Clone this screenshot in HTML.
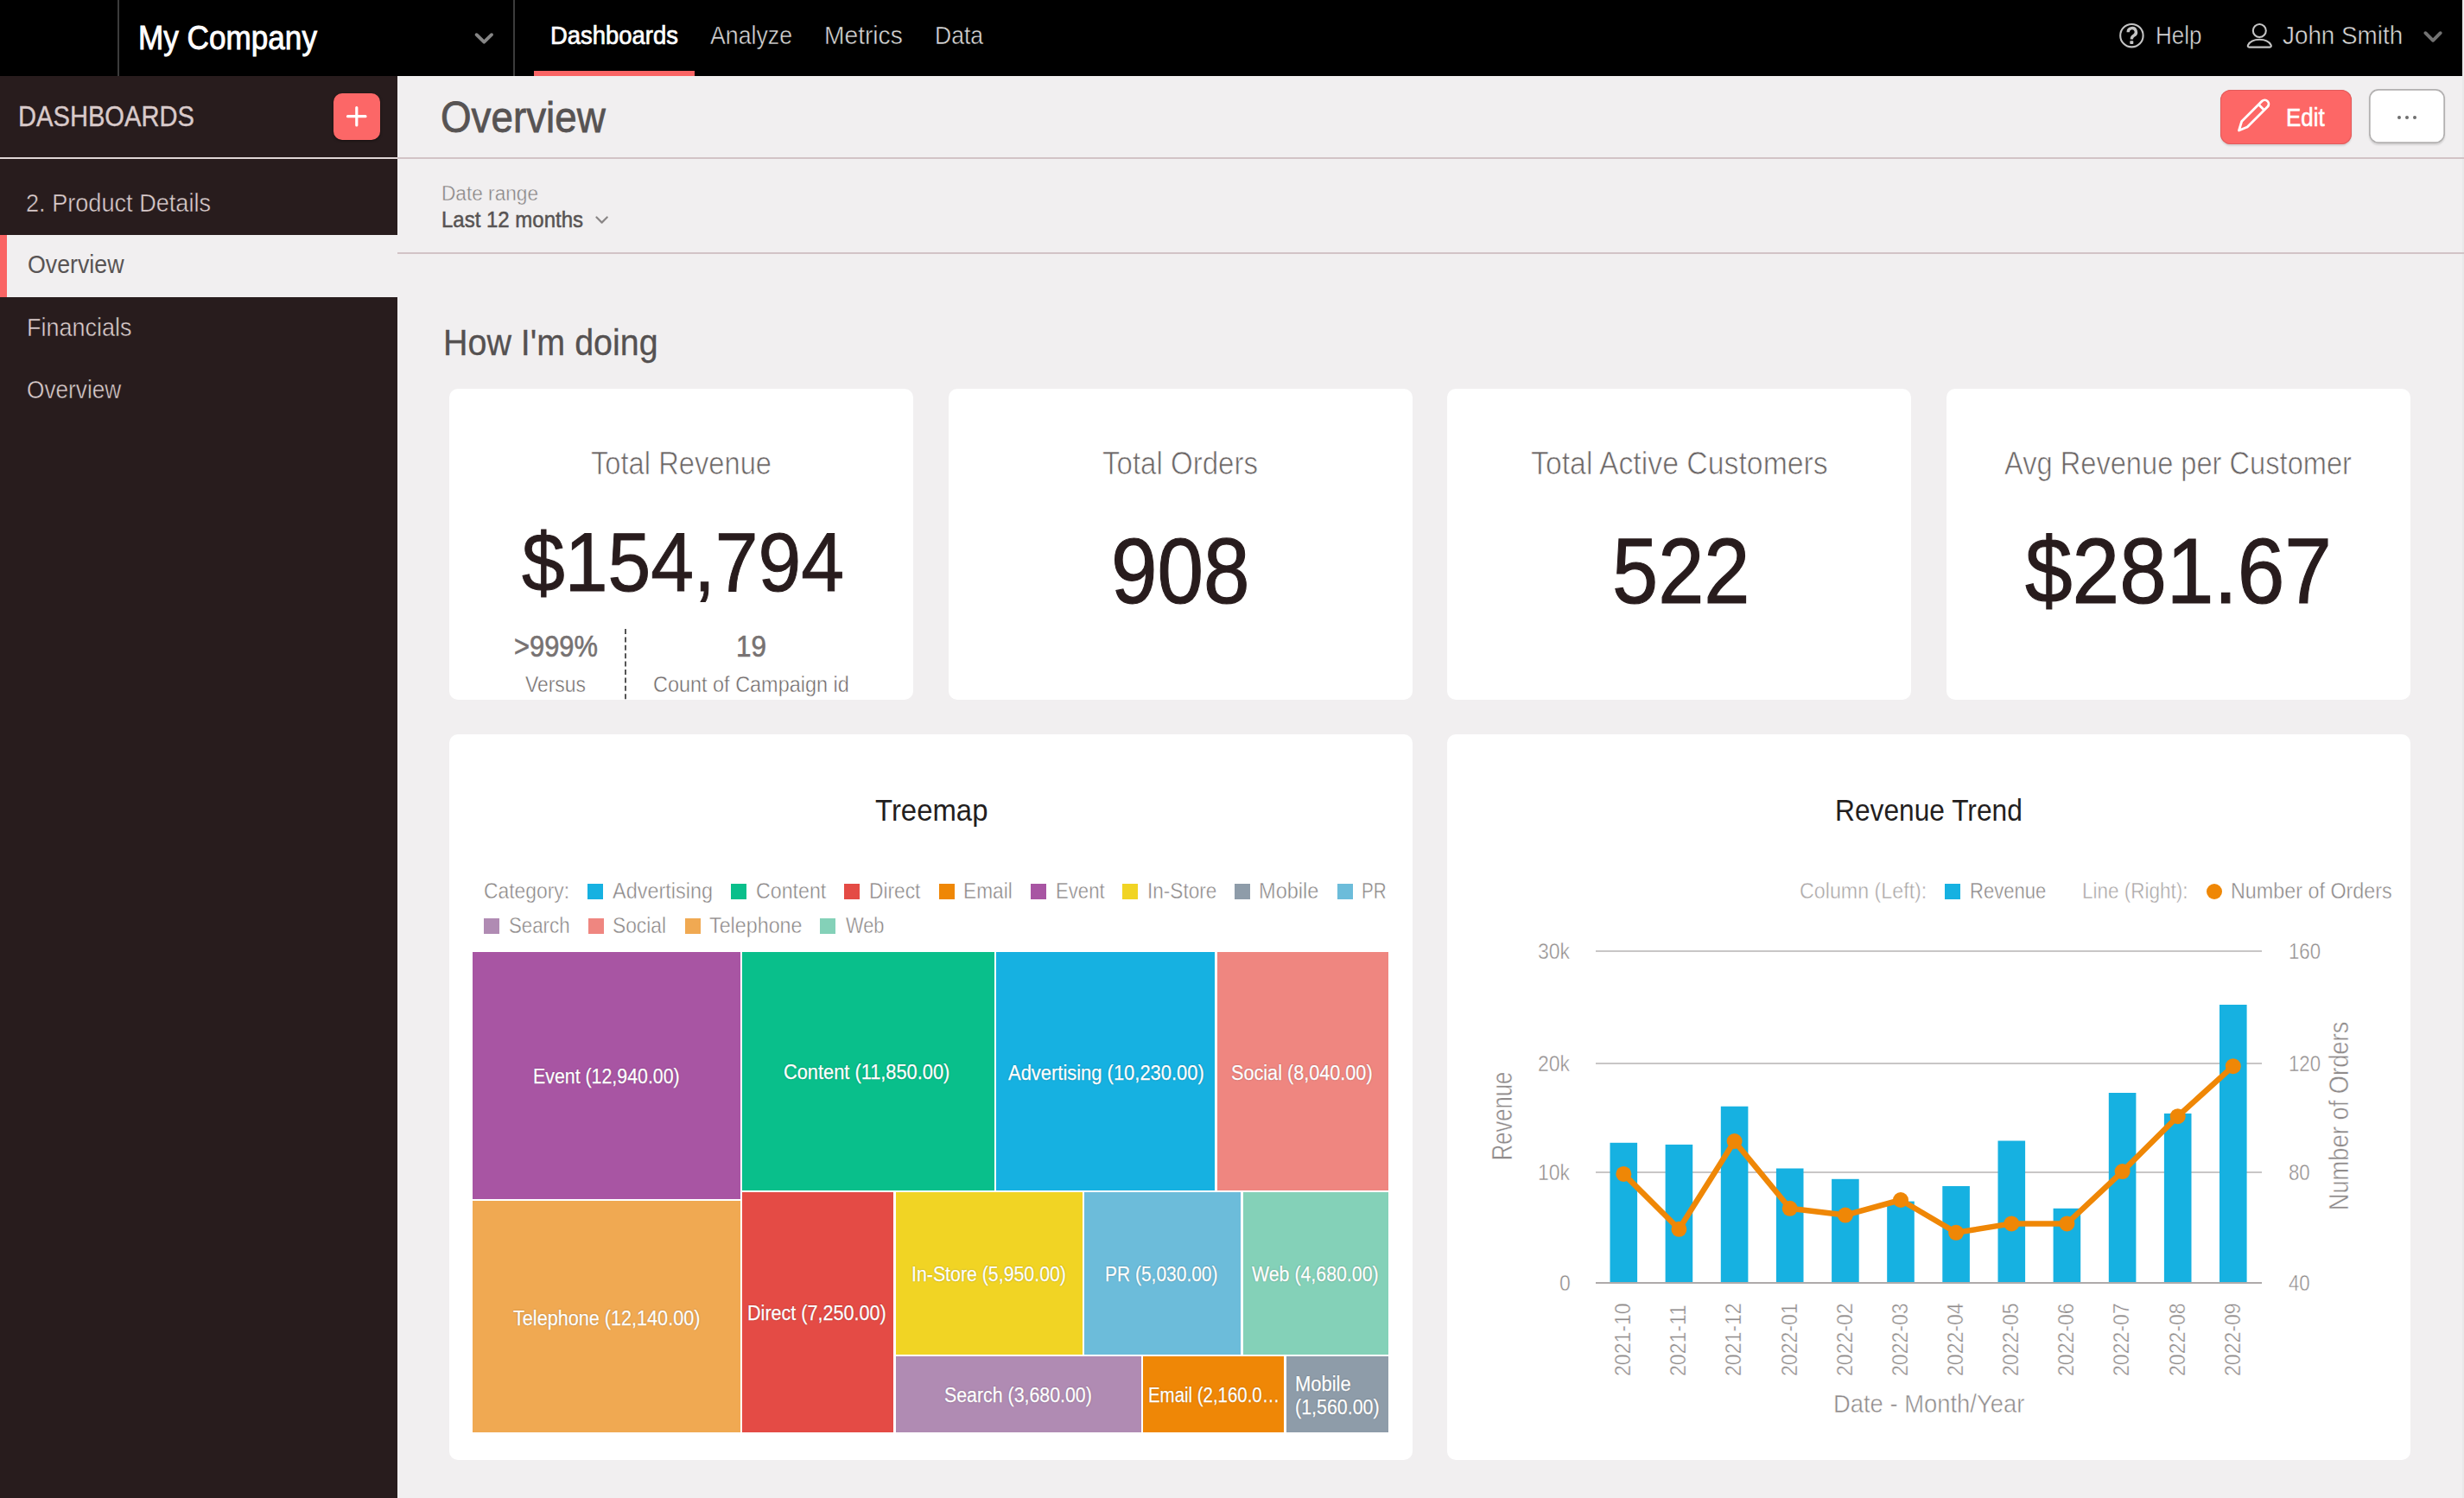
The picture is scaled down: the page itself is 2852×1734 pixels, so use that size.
<!DOCTYPE html>
<html><head><meta charset="utf-8"><title>Overview</title>
<style>
html,body{margin:0;padding:0;width:2852px;height:1734px;overflow:hidden;background:#f1eff0;font-family:"Liberation Sans",sans-serif;}
.t{position:absolute;white-space:nowrap;transform-origin:0 0;}
.r{position:absolute;}
.card{position:absolute;background:#fff;border-radius:10px;}
svg{position:absolute;left:0;top:0;overflow:visible;}
</style></head><body>
<div class="r" style="left:0.0px;top:0.0px;width:2850.0px;height:88.0px;background:#000;"></div>
<div class="r" style="left:2850.0px;top:0.0px;width:2.0px;height:1734.0px;background:#e9e9e9;"></div>
<div class="r" style="left:136.0px;top:0.0px;width:2.0px;height:88.0px;background:#3c3c3c;"></div>
<div class="r" style="left:594.0px;top:0.0px;width:2.0px;height:88.0px;background:#3c3c3c;"></div>
<div class="t" style="left:159.5px;top:24.1px;font-size:39.24px;line-height:39.24px;color:#fff;transform:scaleX(0.8955);-webkit-text-stroke:0.9px #fff;">My Company</div>
<svg width="2852" height="88" style="left:0;top:0"><polyline points="551.6,40.2 560.3,48.6 569,40.2" fill="none" stroke="#858585" stroke-width="3.9" stroke-linecap="round" stroke-linejoin="round"/><polyline points="2807.4,38.2 2816.1,46.8 2824.7,38.2" fill="none" stroke="#727272" stroke-width="3.9" stroke-linecap="round" stroke-linejoin="round"/><circle cx="2467.4" cy="41.2" r="13.2" fill="none" stroke="#c4c4c4" stroke-width="2.1"/><path d="M2463.2,37.2 a4.6,4.6 0 1 1 6.6,4.1 c-1.6,0.9 -2.4,1.8 -2.4,3.4 v0.9" fill="none" stroke="#c4c4c4" stroke-width="3.4" stroke-linecap="butt"/><rect x="2465.3" y="47.3" width="4" height="3.8" rx="0.8" fill="#c4c4c4"/><circle cx="2615.3" cy="35.5" r="7.5" fill="none" stroke="#c4c4c4" stroke-width="2.1"/><path d="M2603.5,54.6 c-1.6,0 -2.2,-1.2 -1.4,-2.6 c2.2,-3.9 7,-6.2 13.2,-6.2 c6.2,0 11,2.3 13.2,6.2 c0.8,1.4 0.2,2.6 -1.4,2.6 z" fill="none" stroke="#c4c4c4" stroke-width="2.1" stroke-linejoin="round"/></svg>
<div class="t" style="left:636.7px;top:27.4px;font-size:29.07px;line-height:29.07px;color:#fff;transform:scaleX(0.9441);-webkit-text-stroke:0.7px #fff;">Dashboards</div>
<div class="t" style="left:822.0px;top:27.4px;font-size:29.07px;line-height:29.07px;color:#d8d8d8;transform:scaleX(0.9186);-webkit-text-stroke:0.5px #000;">Analyze</div>
<div class="t" style="left:953.8px;top:27.4px;font-size:29.07px;line-height:29.07px;color:#d8d8d8;transform:scaleX(0.9693);-webkit-text-stroke:0.5px #000;">Metrics</div>
<div class="t" style="left:1081.6px;top:27.4px;font-size:29.07px;line-height:29.07px;color:#d8d8d8;transform:scaleX(0.9119);-webkit-text-stroke:0.5px #000;">Data</div>
<div class="r" style="left:618.0px;top:82.0px;width:186.0px;height:6.0px;background:#fa6464;"></div>
<div class="t" style="left:2494.5px;top:26.8px;font-size:29.07px;line-height:29.07px;color:#d8d8d8;transform:scaleX(0.8945);-webkit-text-stroke:0.5px #000;">Help</div>
<div class="t" style="left:2641.8px;top:26.8px;font-size:29.07px;line-height:29.07px;color:#d8d8d8;transform:scaleX(0.9572);-webkit-text-stroke:0.5px #000;">John Smith</div>
<div class="r" style="left:0.0px;top:88.0px;width:460.0px;height:1646.0px;background:#281c1d;"></div>
<div class="t" style="left:21.4px;top:118.1px;font-size:33.43px;line-height:33.43px;color:#d9caca;transform:scaleX(0.8714);-webkit-text-stroke:0.4px #d9caca;">DASHBOARDS</div>
<div class="r" style="left:386.0px;top:108.0px;width:54.0px;height:54.0px;background:#fc6767;border-radius:10px;box-shadow:0 1px 3px rgba(0,0,0,0.5);"></div>
<svg width="460" height="200" style="left:0;top:0"><path d="M402.5,134.7 h20.5 M412.8,124.5 v20.5" stroke="#fff" stroke-width="3.2" stroke-linecap="round"/></svg>
<div class="r" style="left:0.0px;top:182.0px;width:460.0px;height:2.0px;background:#e0d6d6;"></div>
<div class="t" style="left:30.4px;top:220.2px;font-size:29.80px;line-height:29.80px;color:#dccdcd;transform:scaleX(0.9100);-webkit-text-stroke:0.5px #281c1d;">2. Product Details</div>
<div class="r" style="left:0.0px;top:272.0px;width:460.0px;height:72.0px;background:#f1eff0;"></div>
<div class="r" style="left:0.0px;top:272.0px;width:8.0px;height:72.0px;background:#fa6464;"></div>
<div class="t" style="left:31.5px;top:292.4px;font-size:29.07px;line-height:29.07px;color:#585454;transform:scaleX(0.9206);">Overview</div>
<div class="t" style="left:31.0px;top:364.4px;font-size:29.51px;line-height:29.51px;color:#dccdcd;transform:scaleX(0.9153);-webkit-text-stroke:0.5px #281c1d;">Financials</div>
<div class="t" style="left:31.0px;top:436.8px;font-size:29.07px;line-height:29.07px;color:#dccdcd;transform:scaleX(0.9025);-webkit-text-stroke:0.5px #281c1d;">Overview</div>
<div class="t" style="left:510.0px;top:111.2px;font-size:49.42px;line-height:49.42px;color:#575353;transform:scaleX(0.9268);-webkit-text-stroke:0.8px #575353;">Overview</div>
<div class="r" style="left:2570.0px;top:103.5px;width:152.0px;height:63.0px;background:#fd6766;border-radius:12px;box-shadow:0 0 0 1px #e25b5b inset,0 1.5px 2px rgba(0,0,0,0.12);"></div>
<svg width="2852" height="200" style="left:0;top:0"><path d="M2591.5,151 l3.2,-10.5 l23.5,-23.5 a4.6,4.6 0 0 1 6.5,6.5 l-23.5,23.5 z M2614.3,120.9 l6.5,6.5" fill="none" stroke="#fff" stroke-width="2.8" stroke-linejoin="round"/></svg>
<div class="t" style="left:2646.3px;top:121.3px;font-size:29.65px;line-height:29.65px;color:#fff;transform:scaleX(0.8732);-webkit-text-stroke:0.6px #fff;">Edit</div>
<div class="r" style="left:2742.3px;top:103.0px;width:87.3px;height:63.3px;background:#fff;border-radius:11px;box-shadow:0 0 0 1.7px #b2b0b0 inset,0 1.5px 2px rgba(0,0,0,0.12);"></div>
<div class="r" style="left:2774.8px;top:134.0px;width:3.8px;height:3.8px;background:#6f6f6f;border-radius:50%;"></div>
<div class="r" style="left:2784.0px;top:134.0px;width:3.8px;height:3.8px;background:#6f6f6f;border-radius:50%;"></div>
<div class="r" style="left:2793.3px;top:134.0px;width:3.8px;height:3.8px;background:#6f6f6f;border-radius:50%;"></div>
<div class="r" style="left:460.0px;top:182.0px;width:2392.0px;height:2.0px;background:#d2c3c6;"></div>
<div class="t" style="left:511.4px;top:211.5px;font-size:24.71px;line-height:24.71px;color:#858181;transform:scaleX(0.9162);-webkit-text-stroke:0.45px #f1eff0;">Date range</div>
<div class="t" style="left:511.0px;top:241.9px;font-size:25.00px;line-height:25.00px;color:#575353;transform:scaleX(0.9594);-webkit-text-stroke:0.5px #575353;">Last 12 months</div>
<svg width="2852" height="300" style="left:0;top:0"><polyline points="690.5,251.5 696.6,257.6 702.7,251.5" fill="none" stroke="#8a8686" stroke-width="2.2" stroke-linecap="round" stroke-linejoin="round"/></svg>
<div class="r" style="left:460.0px;top:292.0px;width:2392.0px;height:2.0px;background:#d2c3c6;"></div>
<div class="t" style="left:512.6px;top:375.7px;font-size:42.15px;line-height:42.15px;color:#555151;transform:scaleX(0.9358);-webkit-text-stroke:0.3px #555151;">How I&#x27;m doing</div>
<div class="card" style="left:520px;top:450px;width:537px;height:360px;"></div>
<div class="card" style="left:1098px;top:450px;width:537px;height:360px;"></div>
<div class="card" style="left:1675px;top:450px;width:537px;height:360px;"></div>
<div class="card" style="left:2253px;top:450px;width:537px;height:360px;"></div>
<div class="t" style="left:684.0px;top:518.7px;font-size:36.05px;line-height:36.05px;color:#6b6666;transform:scaleX(0.9070);-webkit-text-stroke:0.7px #fff;">Total Revenue</div>
<div class="t" style="left:1276.0px;top:518.7px;font-size:36.05px;line-height:36.05px;color:#6b6666;transform:scaleX(0.9167);-webkit-text-stroke:0.7px #fff;">Total Orders</div>
<div class="t" style="left:1771.6px;top:518.7px;font-size:36.05px;line-height:36.05px;color:#6b6666;transform:scaleX(0.9376);-webkit-text-stroke:0.7px #fff;">Total Active Customers</div>
<div class="t" style="left:2320.0px;top:518.7px;font-size:36.05px;line-height:36.05px;color:#6b6666;transform:scaleX(0.9050);-webkit-text-stroke:0.7px #fff;">Avg Revenue per Customer</div>
<div class="t" style="left:603.6px;top:603.1px;font-size:96.95px;line-height:96.95px;color:#281c1d;transform:scaleX(0.9226);-webkit-text-stroke:1.0px #281c1d;">$154,794</div>
<div class="t" style="left:1285.6px;top:608.2px;font-size:106.69px;line-height:106.69px;color:#281c1d;transform:scaleX(0.9016);-webkit-text-stroke:1.2px #281c1d;">908</div>
<div class="t" style="left:1866.0px;top:608.2px;font-size:106.69px;line-height:106.69px;color:#281c1d;transform:scaleX(0.8955);-webkit-text-stroke:1.2px #281c1d;">522</div>
<div class="t" style="left:2344.0px;top:608.2px;font-size:106.69px;line-height:106.69px;color:#281c1d;transform:scaleX(0.9205);-webkit-text-stroke:1.2px #281c1d;">$281.67</div>
<div class="t" style="left:594.8px;top:730.6px;font-size:34.88px;line-height:34.88px;color:#777272;transform:scaleX(0.8849);-webkit-text-stroke:0.6px #777272;">&gt;999%</div>
<div class="t" style="left:852.0px;top:730.6px;font-size:34.88px;line-height:34.88px;color:#777272;transform:scaleX(0.9019);-webkit-text-stroke:0.6px #777272;">19</div>
<div class="t" style="left:608.0px;top:780.1px;font-size:25.15px;line-height:25.15px;color:#6f6a6a;transform:scaleX(0.9105);-webkit-text-stroke:0.45px #fff;">Versus</div>
<div class="t" style="left:756.0px;top:780.1px;font-size:25.15px;line-height:25.15px;color:#6f6a6a;transform:scaleX(0.9325);-webkit-text-stroke:0.45px #fff;">Count of Campaign id</div>
<svg width="2852" height="900" style="left:0;top:0"><line x1="724" y1="728" x2="724" y2="810" stroke="#555" stroke-width="2" stroke-dasharray="6,3.4"/></svg>
<div class="card" style="left:520px;top:850px;width:1115px;height:840px;"></div>
<div class="card" style="left:1675px;top:850px;width:1115px;height:840px;"></div>
<div class="t" style="left:1012.5px;top:920.7px;font-size:35.61px;line-height:35.61px;color:#231e1e;transform:scaleX(0.9243);">Treemap</div>
<div class="t" style="left:560.4px;top:1018.8px;font-size:25.58px;line-height:25.58px;color:#8a8686;transform:scaleX(0.8927);-webkit-text-stroke:0.45px #fff;">Category:</div>
<div class="r" style="left:680.0px;top:1023.0px;width:18.0px;height:18.0px;background:#16b1e1;"></div>
<div class="t" style="left:709.0px;top:1018.8px;font-size:25.58px;line-height:25.58px;color:#8a8686;transform:scaleX(0.9165);-webkit-text-stroke:0.45px #fff;">Advertising</div>
<div class="r" style="left:846.0px;top:1023.0px;width:18.0px;height:18.0px;background:#09bf8b;"></div>
<div class="t" style="left:874.5px;top:1018.8px;font-size:25.58px;line-height:25.58px;color:#8a8686;transform:scaleX(0.9074);-webkit-text-stroke:0.45px #fff;">Content</div>
<div class="r" style="left:976.7px;top:1023.0px;width:18.0px;height:18.0px;background:#e44b45;"></div>
<div class="t" style="left:1006.0px;top:1018.8px;font-size:25.58px;line-height:25.58px;color:#8a8686;transform:scaleX(0.8888);-webkit-text-stroke:0.45px #fff;">Direct</div>
<div class="r" style="left:1086.8px;top:1023.0px;width:18.0px;height:18.0px;background:#ef8706;"></div>
<div class="t" style="left:1115.3px;top:1018.8px;font-size:25.58px;line-height:25.58px;color:#8a8686;transform:scaleX(0.8866);-webkit-text-stroke:0.45px #fff;">Email</div>
<div class="r" style="left:1193.0px;top:1023.0px;width:18.0px;height:18.0px;background:#a855a3;"></div>
<div class="t" style="left:1221.7px;top:1018.8px;font-size:25.58px;line-height:25.58px;color:#8a8686;transform:scaleX(0.8666);-webkit-text-stroke:0.45px #fff;">Event</div>
<div class="r" style="left:1299.0px;top:1023.0px;width:18.0px;height:18.0px;background:#f1d424;"></div>
<div class="t" style="left:1327.9px;top:1018.8px;font-size:25.58px;line-height:25.58px;color:#8a8686;transform:scaleX(0.8824);-webkit-text-stroke:0.45px #fff;">In-Store</div>
<div class="r" style="left:1429.0px;top:1023.0px;width:18.0px;height:18.0px;background:#8e9ca9;"></div>
<div class="t" style="left:1457.4px;top:1018.8px;font-size:25.58px;line-height:25.58px;color:#8a8686;transform:scaleX(0.9212);-webkit-text-stroke:0.45px #fff;">Mobile</div>
<div class="r" style="left:1548.0px;top:1023.0px;width:18.0px;height:18.0px;background:#6cbcda;"></div>
<div class="t" style="left:1576.0px;top:1018.8px;font-size:25.58px;line-height:25.58px;color:#8a8686;transform:scaleX(0.8071);-webkit-text-stroke:0.45px #fff;">PR</div>
<div class="r" style="left:560.4px;top:1063.0px;width:18.0px;height:18.0px;background:#b08bb3;"></div>
<div class="t" style="left:589.0px;top:1058.8px;font-size:25.58px;line-height:25.58px;color:#8a8686;transform:scaleX(0.8701);-webkit-text-stroke:0.45px #fff;">Search</div>
<div class="r" style="left:681.0px;top:1063.0px;width:18.0px;height:18.0px;background:#ef8680;"></div>
<div class="t" style="left:709.0px;top:1058.8px;font-size:25.58px;line-height:25.58px;color:#8a8686;transform:scaleX(0.8902);-webkit-text-stroke:0.45px #fff;">Social</div>
<div class="r" style="left:793.0px;top:1063.0px;width:18.0px;height:18.0px;background:#f0a952;"></div>
<div class="t" style="left:821.0px;top:1058.8px;font-size:25.58px;line-height:25.58px;color:#8a8686;transform:scaleX(0.9106);-webkit-text-stroke:0.45px #fff;">Telephone</div>
<div class="r" style="left:949.0px;top:1063.0px;width:18.0px;height:18.0px;background:#84d1b8;"></div>
<div class="t" style="left:978.5px;top:1058.8px;font-size:25.58px;line-height:25.58px;color:#8a8686;transform:scaleX(0.8538);-webkit-text-stroke:0.45px #fff;">Web</div>
<div class="r" style="left:546.5px;top:1102.0px;width:310.0px;height:286.0px;background:#a855a3;"></div>
<div class="r" style="left:546.5px;top:1390.0px;width:310.0px;height:268.0px;background:#f0a952;"></div>
<div class="r" style="left:858.5px;top:1102.0px;width:292.0px;height:276.0px;background:#09bf8b;"></div>
<div class="r" style="left:1153.0px;top:1102.0px;width:253.0px;height:276.0px;background:#16b1e1;"></div>
<div class="r" style="left:1409.0px;top:1102.0px;width:197.5px;height:276.0px;background:#ef8680;"></div>
<div class="r" style="left:858.5px;top:1380.0px;width:175.5px;height:278.0px;background:#e44b45;"></div>
<div class="r" style="left:1036.5px;top:1380.0px;width:216.0px;height:188.0px;background:#f1d424;"></div>
<div class="r" style="left:1254.5px;top:1380.0px;width:181.5px;height:188.0px;background:#6cbcda;"></div>
<div class="r" style="left:1438.5px;top:1380.0px;width:168.0px;height:188.0px;background:#84d1b8;"></div>
<div class="r" style="left:1036.5px;top:1570.0px;width:284.0px;height:88.0px;background:#b08bb3;"></div>
<div class="r" style="left:1323.0px;top:1570.0px;width:163.0px;height:88.0px;background:#ef8706;"></div>
<div class="r" style="left:1489.0px;top:1570.0px;width:117.5px;height:88.0px;background:#8e9ca9;"></div>
<div class="t" style="left:617.0px;top:1234.5px;font-size:23.55px;line-height:23.55px;color:#fff;transform:scaleX(0.9065);-webkit-text-stroke:0.25px #fff;text-shadow:0 0 2px rgba(0,0,0,0.35);">Event (12,940.00)</div>
<div class="t" style="left:907.3px;top:1230.2px;font-size:23.55px;line-height:23.55px;color:#fff;transform:scaleX(0.9259);-webkit-text-stroke:0.25px #fff;text-shadow:0 0 2px rgba(0,0,0,0.35);">Content (11,850.00)</div>
<div class="t" style="left:1166.8px;top:1230.7px;font-size:23.55px;line-height:23.55px;color:#fff;transform:scaleX(0.9315);-webkit-text-stroke:0.25px #fff;text-shadow:0 0 2px rgba(0,0,0,0.35);">Advertising (10,230.00)</div>
<div class="t" style="left:1424.8px;top:1230.7px;font-size:23.55px;line-height:23.55px;color:#fff;transform:scaleX(0.9190);-webkit-text-stroke:0.25px #fff;text-shadow:0 0 2px rgba(0,0,0,0.35);">Social (8,040.00)</div>
<div class="t" style="left:593.6px;top:1514.5px;font-size:23.55px;line-height:23.55px;color:#fff;transform:scaleX(0.9183);-webkit-text-stroke:0.25px #fff;text-shadow:0 0 2px rgba(0,0,0,0.35);">Telephone (12,140.00)</div>
<div class="t" style="left:864.8px;top:1508.5px;font-size:23.55px;line-height:23.55px;color:#fff;transform:scaleX(0.9164);-webkit-text-stroke:0.25px #fff;text-shadow:0 0 2px rgba(0,0,0,0.35);">Direct (7,250.00)</div>
<div class="t" style="left:1055.0px;top:1464.2px;font-size:23.55px;line-height:23.55px;color:#fff;transform:scaleX(0.9055);-webkit-text-stroke:0.25px #fff;text-shadow:0 0 2px rgba(0,0,0,0.35);">In-Store (5,950.00)</div>
<div class="t" style="left:1279.0px;top:1464.2px;font-size:23.55px;line-height:23.55px;color:#fff;transform:scaleX(0.8903);-webkit-text-stroke:0.25px #fff;text-shadow:0 0 2px rgba(0,0,0,0.35);">PR (5,030.00)</div>
<div class="t" style="left:1449.0px;top:1464.2px;font-size:23.55px;line-height:23.55px;color:#fff;transform:scaleX(0.9056);-webkit-text-stroke:0.25px #fff;text-shadow:0 0 2px rgba(0,0,0,0.35);">Web (4,680.00)</div>
<div class="t" style="left:1092.7px;top:1604.3px;font-size:23.55px;line-height:23.55px;color:#fff;transform:scaleX(0.9061);-webkit-text-stroke:0.25px #fff;text-shadow:0 0 2px rgba(0,0,0,0.35);">Search (3,680.00)</div>
<div class="t" style="left:1329.3px;top:1604.3px;font-size:23.55px;line-height:23.55px;color:#fff;transform:scaleX(0.8673);-webkit-text-stroke:0.25px #fff;text-shadow:0 0 2px rgba(0,0,0,0.35);">Email (2,160.0…</div>
<div class="t" style="left:1499.4px;top:1590.7px;font-size:23.55px;line-height:23.55px;color:#fff;transform:scaleX(0.9316);-webkit-text-stroke:0.25px #fff;text-shadow:0 0 2px rgba(0,0,0,0.35);">Mobile</div>
<div class="t" style="left:1499.4px;top:1617.5px;font-size:23.55px;line-height:23.55px;color:#fff;transform:scaleX(0.9090);-webkit-text-stroke:0.25px #fff;text-shadow:0 0 2px rgba(0,0,0,0.35);">(1,560.00)</div>
<div class="t" style="left:2123.8px;top:920.7px;font-size:35.61px;line-height:35.61px;color:#231e1e;transform:scaleX(0.8904);">Revenue Trend</div>
<div class="t" style="left:2082.5px;top:1018.8px;font-size:25.58px;line-height:25.58px;color:#aaa6a6;transform:scaleX(0.9089);-webkit-text-stroke:0.45px #fff;">Column (Left):</div>
<div class="r" style="left:2251.0px;top:1023.0px;width:18.0px;height:18.0px;background:#16b1e1;"></div>
<div class="t" style="left:2279.7px;top:1018.8px;font-size:25.58px;line-height:25.58px;color:#8a8686;transform:scaleX(0.8624);-webkit-text-stroke:0.45px #fff;">Revenue</div>
<div class="t" style="left:2410.0px;top:1018.8px;font-size:25.58px;line-height:25.58px;color:#aaa6a6;transform:scaleX(0.8798);-webkit-text-stroke:0.45px #fff;">Line (Right):</div>
<div class="r" style="left:2554.0px;top:1022.7px;width:18.0px;height:18.0px;background:#ef8706;border-radius:50%;"></div>
<div class="t" style="left:2582.3px;top:1018.8px;font-size:25.58px;line-height:25.58px;color:#8a8686;transform:scaleX(0.9120);-webkit-text-stroke:0.45px #fff;">Number of Orders</div>
<svg width="2852" height="1734" style="left:0;top:0"><rect x="1847" y="1100.0" width="771" height="2" fill="#c8c6c6"/><rect x="1847" y="1230.0" width="771" height="2" fill="#c8c6c6"/><rect x="1847" y="1356.0" width="771" height="2" fill="#c8c6c6"/><rect x="1847" y="1484.0" width="771" height="2" fill="#aeaaaa"/><rect x="1863.5" y="1322.8" width="31.6" height="161.2" fill="#16b1e1"/><rect x="1927.6" y="1324.9" width="31.6" height="159.1" fill="#16b1e1"/><rect x="1991.8" y="1280.7" width="31.6" height="203.3" fill="#16b1e1"/><rect x="2055.9" y="1352.5" width="31.6" height="131.5" fill="#16b1e1"/><rect x="2120.1" y="1364.8" width="31.6" height="119.2" fill="#16b1e1"/><rect x="2184.2" y="1390.6" width="31.6" height="93.4" fill="#16b1e1"/><rect x="2248.3" y="1373.0" width="31.6" height="111.0" fill="#16b1e1"/><rect x="2312.5" y="1320.5" width="31.6" height="163.5" fill="#16b1e1"/><rect x="2376.6" y="1398.8" width="31.6" height="85.2" fill="#16b1e1"/><rect x="2440.8" y="1265.0" width="31.6" height="219.0" fill="#16b1e1"/><rect x="2504.9" y="1288.9" width="31.6" height="195.1" fill="#16b1e1"/><rect x="2569.0" y="1163.0" width="31.6" height="321.0" fill="#16b1e1"/><polyline points="1879.3,1358.9 1943.4,1422.8 2007.6,1321.0 2071.7,1398.8 2135.9,1406.6 2200.0,1389.0 2264.1,1426.8 2328.3,1416.4 2392.4,1416.4 2456.6,1356.1 2520.7,1292.2 2584.8,1234.2" fill="none" stroke="#ef8706" stroke-width="6.5" stroke-linejoin="round"/><circle cx="1879.3" cy="1358.9" r="9" fill="#ef8706"/><circle cx="1943.4" cy="1422.8" r="9" fill="#ef8706"/><circle cx="2007.6" cy="1321.0" r="9" fill="#ef8706"/><circle cx="2071.7" cy="1398.8" r="9" fill="#ef8706"/><circle cx="2135.9" cy="1406.6" r="9" fill="#ef8706"/><circle cx="2200.0" cy="1389.0" r="9" fill="#ef8706"/><circle cx="2264.1" cy="1426.8" r="9" fill="#ef8706"/><circle cx="2328.3" cy="1416.4" r="9" fill="#ef8706"/><circle cx="2392.4" cy="1416.4" r="9" fill="#ef8706"/><circle cx="2456.6" cy="1356.1" r="9" fill="#ef8706"/><circle cx="2520.7" cy="1292.2" r="9" fill="#ef8706"/><circle cx="2584.8" cy="1234.2" r="9" fill="#ef8706"/></svg>
<div class="t" style="left:1780.4px;top:1089.0px;font-size:25.00px;line-height:25.00px;color:#8f8b8b;transform:scaleX(0.9200);-webkit-text-stroke:0.45px #fff;">30k</div>
<div class="t" style="left:1780.4px;top:1219.0px;font-size:25.00px;line-height:25.00px;color:#8f8b8b;transform:scaleX(0.9200);-webkit-text-stroke:0.45px #fff;">20k</div>
<div class="t" style="left:1780.4px;top:1345.0px;font-size:25.00px;line-height:25.00px;color:#8f8b8b;transform:scaleX(0.9200);-webkit-text-stroke:0.45px #fff;">10k</div>
<div class="t" style="left:1804.7px;top:1473.0px;font-size:25.00px;line-height:25.00px;color:#8f8b8b;transform:scaleX(0.9200);-webkit-text-stroke:0.45px #fff;">0</div>
<div class="t" style="left:2648.6px;top:1089.0px;font-size:25.00px;line-height:25.00px;color:#8f8b8b;transform:scaleX(0.8900);-webkit-text-stroke:0.45px #fff;">160</div>
<div class="t" style="left:2648.6px;top:1219.0px;font-size:25.00px;line-height:25.00px;color:#8f8b8b;transform:scaleX(0.8900);-webkit-text-stroke:0.45px #fff;">120</div>
<div class="t" style="left:2648.6px;top:1345.0px;font-size:25.00px;line-height:25.00px;color:#8f8b8b;transform:scaleX(0.8900);-webkit-text-stroke:0.45px #fff;">80</div>
<div class="t" style="left:2648.6px;top:1473.0px;font-size:25.00px;line-height:25.00px;color:#8f8b8b;transform:scaleX(0.8900);-webkit-text-stroke:0.45px #fff;">40</div>
<div class="t" style="left:1739.3px;top:1292.2px;font-size:32.70px;line-height:32.70px;color:#8f8b8b;transform:translate(-50%,-50%) rotate(-90deg) scaleX(0.7831);transform-origin:50% 50%;-webkit-text-stroke:0.5px #fff;">Revenue</div>
<div class="t" style="left:2707.1px;top:1291.7px;font-size:31.98px;line-height:31.98px;color:#8f8b8b;transform:translate(-50%,-50%) rotate(-90deg) scaleX(0.8547);transform-origin:50% 50%;-webkit-text-stroke:0.5px #fff;">Number of Orders</div>
<div class="t" style="left:1888.1px;top:1593.4px;font-size:25.36px;line-height:25.36px;color:#8f8b8b;transform-origin:0 0;transform:rotate(-90deg) scaleX(0.9090) translate(-0.00px,-21.55px);-webkit-text-stroke:0.45px #fff;">2021-10</div>
<div class="t" style="left:1952.3px;top:1593.4px;font-size:25.36px;line-height:25.36px;color:#8f8b8b;transform-origin:0 0;transform:rotate(-90deg) scaleX(0.9090) translate(-0.00px,-21.55px);-webkit-text-stroke:0.45px #fff;">2021-11</div>
<div class="t" style="left:2016.4px;top:1593.4px;font-size:25.36px;line-height:25.36px;color:#8f8b8b;transform-origin:0 0;transform:rotate(-90deg) scaleX(0.9090) translate(-0.00px,-21.55px);-webkit-text-stroke:0.45px #fff;">2021-12</div>
<div class="t" style="left:2080.6px;top:1593.4px;font-size:25.36px;line-height:25.36px;color:#8f8b8b;transform-origin:0 0;transform:rotate(-90deg) scaleX(0.9090) translate(-0.00px,-21.55px);-webkit-text-stroke:0.45px #fff;">2022-01</div>
<div class="t" style="left:2144.7px;top:1593.4px;font-size:25.36px;line-height:25.36px;color:#8f8b8b;transform-origin:0 0;transform:rotate(-90deg) scaleX(0.9090) translate(-0.00px,-21.55px);-webkit-text-stroke:0.45px #fff;">2022-02</div>
<div class="t" style="left:2208.8px;top:1593.4px;font-size:25.36px;line-height:25.36px;color:#8f8b8b;transform-origin:0 0;transform:rotate(-90deg) scaleX(0.9090) translate(-0.00px,-21.55px);-webkit-text-stroke:0.45px #fff;">2022-03</div>
<div class="t" style="left:2273.0px;top:1593.4px;font-size:25.36px;line-height:25.36px;color:#8f8b8b;transform-origin:0 0;transform:rotate(-90deg) scaleX(0.9090) translate(-0.00px,-21.55px);-webkit-text-stroke:0.45px #fff;">2022-04</div>
<div class="t" style="left:2337.1px;top:1593.4px;font-size:25.36px;line-height:25.36px;color:#8f8b8b;transform-origin:0 0;transform:rotate(-90deg) scaleX(0.9090) translate(-0.00px,-21.55px);-webkit-text-stroke:0.45px #fff;">2022-05</div>
<div class="t" style="left:2401.3px;top:1593.4px;font-size:25.36px;line-height:25.36px;color:#8f8b8b;transform-origin:0 0;transform:rotate(-90deg) scaleX(0.9090) translate(-0.00px,-21.55px);-webkit-text-stroke:0.45px #fff;">2022-06</div>
<div class="t" style="left:2465.4px;top:1593.4px;font-size:25.36px;line-height:25.36px;color:#8f8b8b;transform-origin:0 0;transform:rotate(-90deg) scaleX(0.9090) translate(-0.00px,-21.55px);-webkit-text-stroke:0.45px #fff;">2022-07</div>
<div class="t" style="left:2529.5px;top:1593.4px;font-size:25.36px;line-height:25.36px;color:#8f8b8b;transform-origin:0 0;transform:rotate(-90deg) scaleX(0.9090) translate(-0.00px,-21.55px);-webkit-text-stroke:0.45px #fff;">2022-08</div>
<div class="t" style="left:2593.7px;top:1593.4px;font-size:25.36px;line-height:25.36px;color:#8f8b8b;transform-origin:0 0;transform:rotate(-90deg) scaleX(0.9090) translate(-0.00px,-21.55px);-webkit-text-stroke:0.45px #fff;">2022-09</div>
<div class="t" style="left:2122.2px;top:1611.0px;font-size:28.63px;line-height:28.63px;color:#8f8b8b;transform:scaleX(0.9569);-webkit-text-stroke:0.5px #fff;">Date - Month/Year</div>
</body></html>
